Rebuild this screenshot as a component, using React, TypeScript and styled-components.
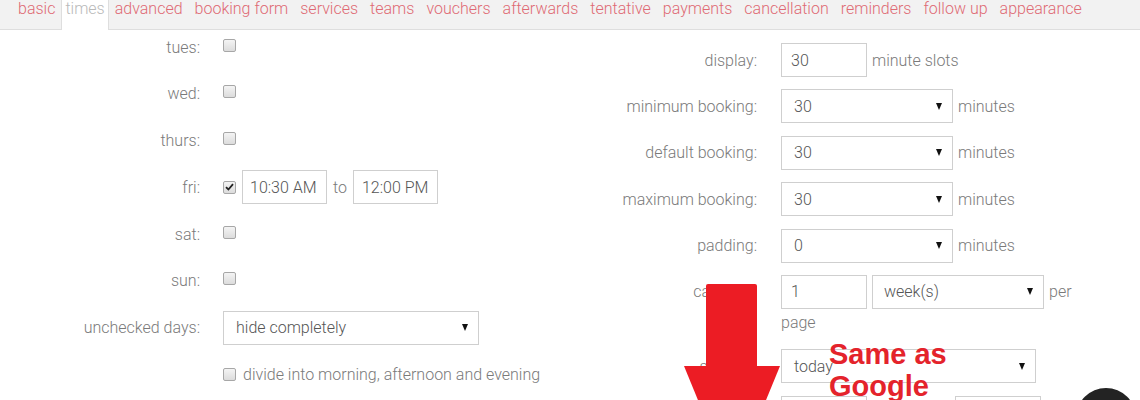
import React from "react";
import styled, { createGlobalStyle } from "styled-components";

const Global = createGlobalStyle`
  html, body { margin: 0; padding: 0; overflow: hidden; background: #fff; }
  body { font-family: Roboto, "Liberation Sans", sans-serif; font-weight: 300; font-size: 16px; color: #777; }
`;

const Page = styled.div`
  position: relative;
  width: 1140px;
  height: 400px;
  overflow: hidden;
`;

const TabBar = styled.nav`
  display: flex;
  align-items: flex-start;
  height: 29px;
  padding-left: 12px;
  background: #f2f2f2;
  border-bottom: 1px solid #dedede;
`;

const Tab = styled.a<{ $active?: boolean }>`
  display: block;
  box-sizing: border-box;
  height: ${(p) => (p.$active ? "30px" : "29px")};
  padding: 0 ${(p) => (p.$active ? "3px" : "6px")};
  line-height: 17px;
  color: ${(p) => (p.$active ? "#b9b9b9" : "#df6a74")};
  background: ${(p) => (p.$active ? "#fff" : "transparent")};
  border-left: ${(p) => (p.$active ? "1px solid #dedede" : "none")};
  border-right: ${(p) => (p.$active ? "1px solid #dedede" : "none")};
  text-decoration: none;
  white-space: nowrap;
`;

const Columns = styled.div`
  display: flex;
  align-items: flex-start;
`;

const Form = styled.div<{ $labelWidth: number; $gap: number; $top: number; $rowGap: number; $width?: number }>`
  display: grid;
  grid-template-columns: ${(p) => p.$labelWidth}px 1fr;
  column-gap: ${(p) => p.$gap}px;
  row-gap: ${(p) => p.$rowGap}px;
  padding-top: ${(p) => p.$top}px;
  ${(p) => (p.$width ? `width: ${p.$width}px;` : "flex: 1;")}
  align-items: start;
`;

const Label = styled.div`
  height: 34px;
  display: flex;
  align-items: center;
  justify-content: flex-end;
  color: #7a7a7a;
  white-space: nowrap;
`;

const Control = styled.div<{ $gap?: number }>`
  min-height: 34px;
  display: flex;
  align-items: center;
  gap: ${(p) => p.$gap ?? 5}px;
  color: #7a7a7a;
  white-space: nowrap;
`;

const Stack = styled.div`
  display: flex;
  flex-direction: column;
`;

const TextLine = styled.div`
  height: 28px;
  display: flex;
  align-items: center;
  color: #7a7a7a;
`;

const Box = styled.div<{ $w: number; $pad?: number }>`
  box-sizing: border-box;
  width: ${(p) => p.$w}px;
  height: 34px;
  border: 1px solid #cfcfcf;
  background: #fff;
  padding-left: ${(p) => p.$pad ?? 9}px;
  display: flex;
  align-items: center;
  color: #555;
  font-weight: 300;
`;

const Select = styled(Box)`
  padding-right: 10px;
  justify-content: space-between;
`;

const Caret = styled.span`
  width: 0;
  height: 0;
  border-left: 3.5px solid transparent;
  border-right: 3.5px solid transparent;
  border-top: 7px solid #111;
`;

const Check = styled.span`
  box-sizing: border-box;
  width: 13px;
  height: 13px;
  border: 1px solid #a7a7a7;
  border-radius: 2px;
  background: linear-gradient(#f4f4f4, #dcdcdc);
  display: inline-flex;
  align-items: center;
  justify-content: center;
  flex: none;
`;

const CheckCtl = styled.div`
  height: 34px;
  display: flex;
  align-items: center;
  padding-bottom: 4px;
  box-sizing: border-box;
`;

const FriCtl = styled.div`
  height: 34px;
  display: flex;
  align-items: center;
  gap: 6px;
  color: #7a7a7a;
`;

const DivideCtl = styled.div`
  grid-column: 2;
  height: 34px;
  display: flex;
  align-items: center;
  gap: 7px;
  color: #7a7a7a;
  white-space: nowrap;
`;

const Arrow = styled.svg`
  position: absolute;
  left: 684px;
  top: 284px;
`;

const Callout = styled.div`
  position: absolute;
  left: 829px;
  top: 338px;
  font-family: "Liberation Sans", Arial, sans-serif;
  font-weight: 700;
  font-size: 29px;
  line-height: 32px;
  color: #e4232b;
`;

const ChatBubble = styled.div`
  position: absolute;
  left: 1076px;
  top: 388px;
  width: 60px;
  height: 60px;
  border-radius: 50%;
  background: #232323;
`;

const tabs = [
  "basic", "times", "advanced", "booking form", "services", "teams", "vouchers",
  "afterwards", "tentative", "payments", "cancellation", "reminders", "follow up", "appearance",
];

const CheckBox = ({ checked }: { checked?: boolean }) => (
  <Check>
    {checked && (
      <svg width="9" height="8" viewBox="0 0 9 8">
        <path d="M1 4.2 L3.4 6.5 L8 1.2" stroke="#222" strokeWidth="1.8" fill="none" />
      </svg>
    )}
  </Check>
);

const Sel = ({ w, value, pad = 12 }: { w: number; value: string; pad?: number }) => (
  <Select $w={w} $pad={pad}>
    <span>{value}</span>
    <Caret />
  </Select>
);

export default function App() {
  const days = ["tues", "wed", "thurs"];
  return (
    <Page>
      <Global />
      <TabBar>
        {tabs.map((t) => (
          <Tab key={t} $active={t === "times"}>{t}</Tab>
        ))}
      </TabBar>
      <Columns>
        <Form $labelWidth={200} $gap={23} $top={0} $rowGap={12.8} $width={560}>
          {days.map((d) => (
            <React.Fragment key={d}>
              <Label>{d}:</Label>
              <CheckCtl><CheckBox /></CheckCtl>
            </React.Fragment>
          ))}
          <Label>fri:</Label>
          <FriCtl>
            <CheckBox checked />
            <Box $w={85} $pad={7}>10:30 AM</Box>
            <span>to</span>
            <Box $w={85} $pad={8}>12:00 PM</Box>
          </FriCtl>
          <Label>sat:</Label>
          <CheckCtl><CheckBox /></CheckCtl>
          <Label>sun:</Label>
          <CheckCtl><CheckBox /></CheckCtl>
          <Label>unchecked days:</Label>
          <Control><Sel w={256} value="hide completely" /></Control>
          <DivideCtl>
            <CheckBox />
            <span>divide into morning, afternoon and evening</span>
          </DivideCtl>
        </Form>
        <Form $labelWidth={197} $gap={24} $top={13} $rowGap={12.4}>
          <Label>display:</Label>
          <Control>
            <Box $w={86}>30</Box>
            <span>minute slots</span>
          </Control>
          <Label>minimum booking:</Label>
          <Control><Sel w={172} value="30" /><span>minutes</span></Control>
          <Label>default booking:</Label>
          <Control><Sel w={172} value="30" /><span>minutes</span></Control>
          <Label>maximum booking:</Label>
          <Control><Sel w={172} value="30" /><span>minutes</span></Control>
          <Label>padding:</Label>
          <Control><Sel w={172} value="0" /><span>minutes</span></Control>
          <Label>calendar:</Label>
          <Stack>
            <Control>
              <Box $w={86}>1</Box>
              <Sel w={172} value="week(s)" pad={11} />
              <span>per</span>
            </Control>
            <TextLine>page</TextLine>
          </Stack>
          <Label>starting:</Label>
          <Control><Sel w={255} value="today" /></Control>
          <Label />
          <Control $gap={88}>
            <Box $w={86} />
            <Box $w={86} />
          </Control>
        </Form>
      </Columns>

      <Arrow width="96" height="116" viewBox="0 0 96 116">
        <rect x="22" y="0" width="51" height="84" rx="2" fill="#ec1c24" />
        <polygon points="0,82 96,82 48,199" fill="#ec1c24" />
      </Arrow>
      <Callout>
        Same as
        <br />
        Google
      </Callout>
      <ChatBubble />
    </Page>
  );
}
